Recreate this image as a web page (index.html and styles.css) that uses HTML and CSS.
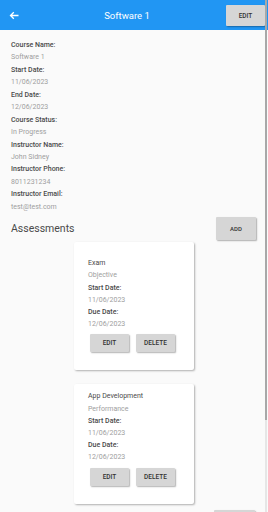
FILE: index.html
```html
<!DOCTYPE html>
<html lang="en">
<head>
    <meta charset="UTF-8">
    <meta name="viewport" content="width=device-width, initial-scale=1.0">
    <title>Software 1</title>
    <link rel="stylesheet" href="styles.css">
</head>
<body>

    <!-- Top App Bar -->
    <div class="app-bar">
        <div class="back">
            <svg width="10" height="9" viewBox="0 0 10 9">
                <path d="M9.5 4.5H1.5M4.8 1.2L1.5 4.5L4.8 7.8" stroke="#fff" stroke-width="1.3" fill="none"/>
            </svg>
        </div>
        <div class="app-title">Software 1</div>
        <button class="btn btn-bar">EDIT</button>
    </div>

    <!-- Course Details -->
    <div class="details">
        <div class="label">Course Name:</div>
        <div class="value">Software 1</div>
        <div class="label">Start Date:</div>
        <div class="value">11/06/2023</div>
        <div class="label">End Date:</div>
        <div class="value">12/06/2023</div>
        <div class="label">Course Status:</div>
        <div class="value">In Progress</div>
        <div class="label">Instructor Name:</div>
        <div class="value">John Sidney</div>
        <div class="label">Instructor Phone:</div>
        <div class="value">8011231234</div>
        <div class="label">Instructor Email:</div>
        <div class="value">test@test.com</div>
    </div>

    <div class="section-row">
        <h2 class="section-title">Assessments</h2>
        <button class="btn btn-add">ADD</button>
    </div>

    <!-- Assessment Cards -->
    <div class="card card-first">
        <div class="name">Exam</div>
        <div class="value">Objective</div>
        <div class="label">Start Date:</div>
        <div class="value">11/06/2023</div>
        <div class="label">Due Date:</div>
        <div class="value">12/06/2023</div>
        <div class="card-actions">
            <button class="btn btn-card">EDIT</button>
            <button class="btn btn-card">DELETE</button>
        </div>
    </div>

    <div class="card">
        <div class="name">App Development</div>
        <div class="value">Performance</div>
        <div class="label">Start Date:</div>
        <div class="value">11/06/2023</div>
        <div class="label">Due Date:</div>
        <div class="value">12/06/2023</div>
        <div class="card-actions">
            <button class="btn btn-card">EDIT</button>
            <button class="btn btn-card">DELETE</button>
        </div>
    </div>

    <div class="section-row more-row">
        <button class="btn btn-more"></button>
    </div>

    <!-- Scroll indicator -->
    <div class="scroll-track"><div class="scroll-thumb"></div></div>

</body>
</html>
```

FILE: styles.css
```css
/* General Style */
html {
    overflow: hidden;
}
body {
    font-family: Roboto, "Noto Sans", Arial, sans-serif;
    margin: 0;
    padding: 0;
    background-color: #fafafa;
    color: #424242;
    position: relative;
    min-height: 512px;
}

/* App Bar */
.app-bar {
    display: flex;
    align-items: center;
    height: 30px;
    background-color: #2196f3;
    padding-right: 3px;
}
.back {
    width: 28px;
    display: flex;
    justify-content: flex-start;
    padding-left: 9px;
    box-sizing: border-box;
    height: 30px;
    align-items: center;
}
.app-title {
    flex: 1;
    text-align: center;
    color: #ffffff;
    font-size: 9.5px;
}

/* Buttons */
.btn {
    font-family: Roboto, Arial, sans-serif;
    font-weight: 500;
    border: none;
    border-radius: 1px;
    background-color: #d6d6d6;
    color: #333;
    padding: 0;
    box-shadow: 1px 1px 1.5px rgba(0, 0, 0, 0.3);
}
.btn-bar {
    width: 39px;
    height: 21px;
    font-size: 6.5px;
    margin-top: 1px;
}
.btn-add {
    width: 40px;
    height: 23px;
    font-size: 6px;
    margin-right: 12px;
}
.btn-card {
    width: 39px;
    height: 18px;
    font-size: 6.5px;
}
.btn-more {
    width: 41px;
    height: 23px;
    margin-right: 13px;
}

/* Details */
.details {
    padding: 9px 11px 0;
}
.label, .value, .name {
    font-size: 7px;
    line-height: 12.44px;
    white-space: nowrap;
}
.label {
    font-weight: 500;
    color: #4a4a4a;
}
.value {
    color: #9e9e9e;
}
.name {
    color: #4a4a4a;
}

/* Section */
.section-row {
    display: flex;
    align-items: center;
    justify-content: space-between;
    padding-left: 11px;
    height: 27px;
    margin-top: 2px;
}
.section-title {
    font-size: 10.5px;
    font-weight: 400;
    color: #4a4a4a;
    margin: 0;
}
.more-row {
    justify-content: flex-end;
    align-items: flex-start;
    margin-top: 6px;
}

/* Cards */
.card {
    width: 120px;
    margin: 14px auto 0;
    box-sizing: border-box;
    background-color: #ffffff;
    border-radius: 2px;
    padding: 6px 14px 18px;
    box-shadow: 1px 1px 2px rgba(0, 0, 0, 0.3);
}
.card .label, .card .value, .card .name {
    line-height: 12.2px;
}
.card-first {
    margin-top: 0;
    padding-top: 15px;
}
.card-actions {
    display: flex;
    gap: 7px;
    margin-top: 4px;
    padding-left: 2px;
}

/* Scroll indicator */
.scroll-track {
    position: absolute;
    top: 0;
    right: 1px;
    width: 2px;
    height: 512px;
    background-color: #e6e6e6;
}
.scroll-thumb {
    height: 420px;
    background-color: #a8a8a8;
}
```
